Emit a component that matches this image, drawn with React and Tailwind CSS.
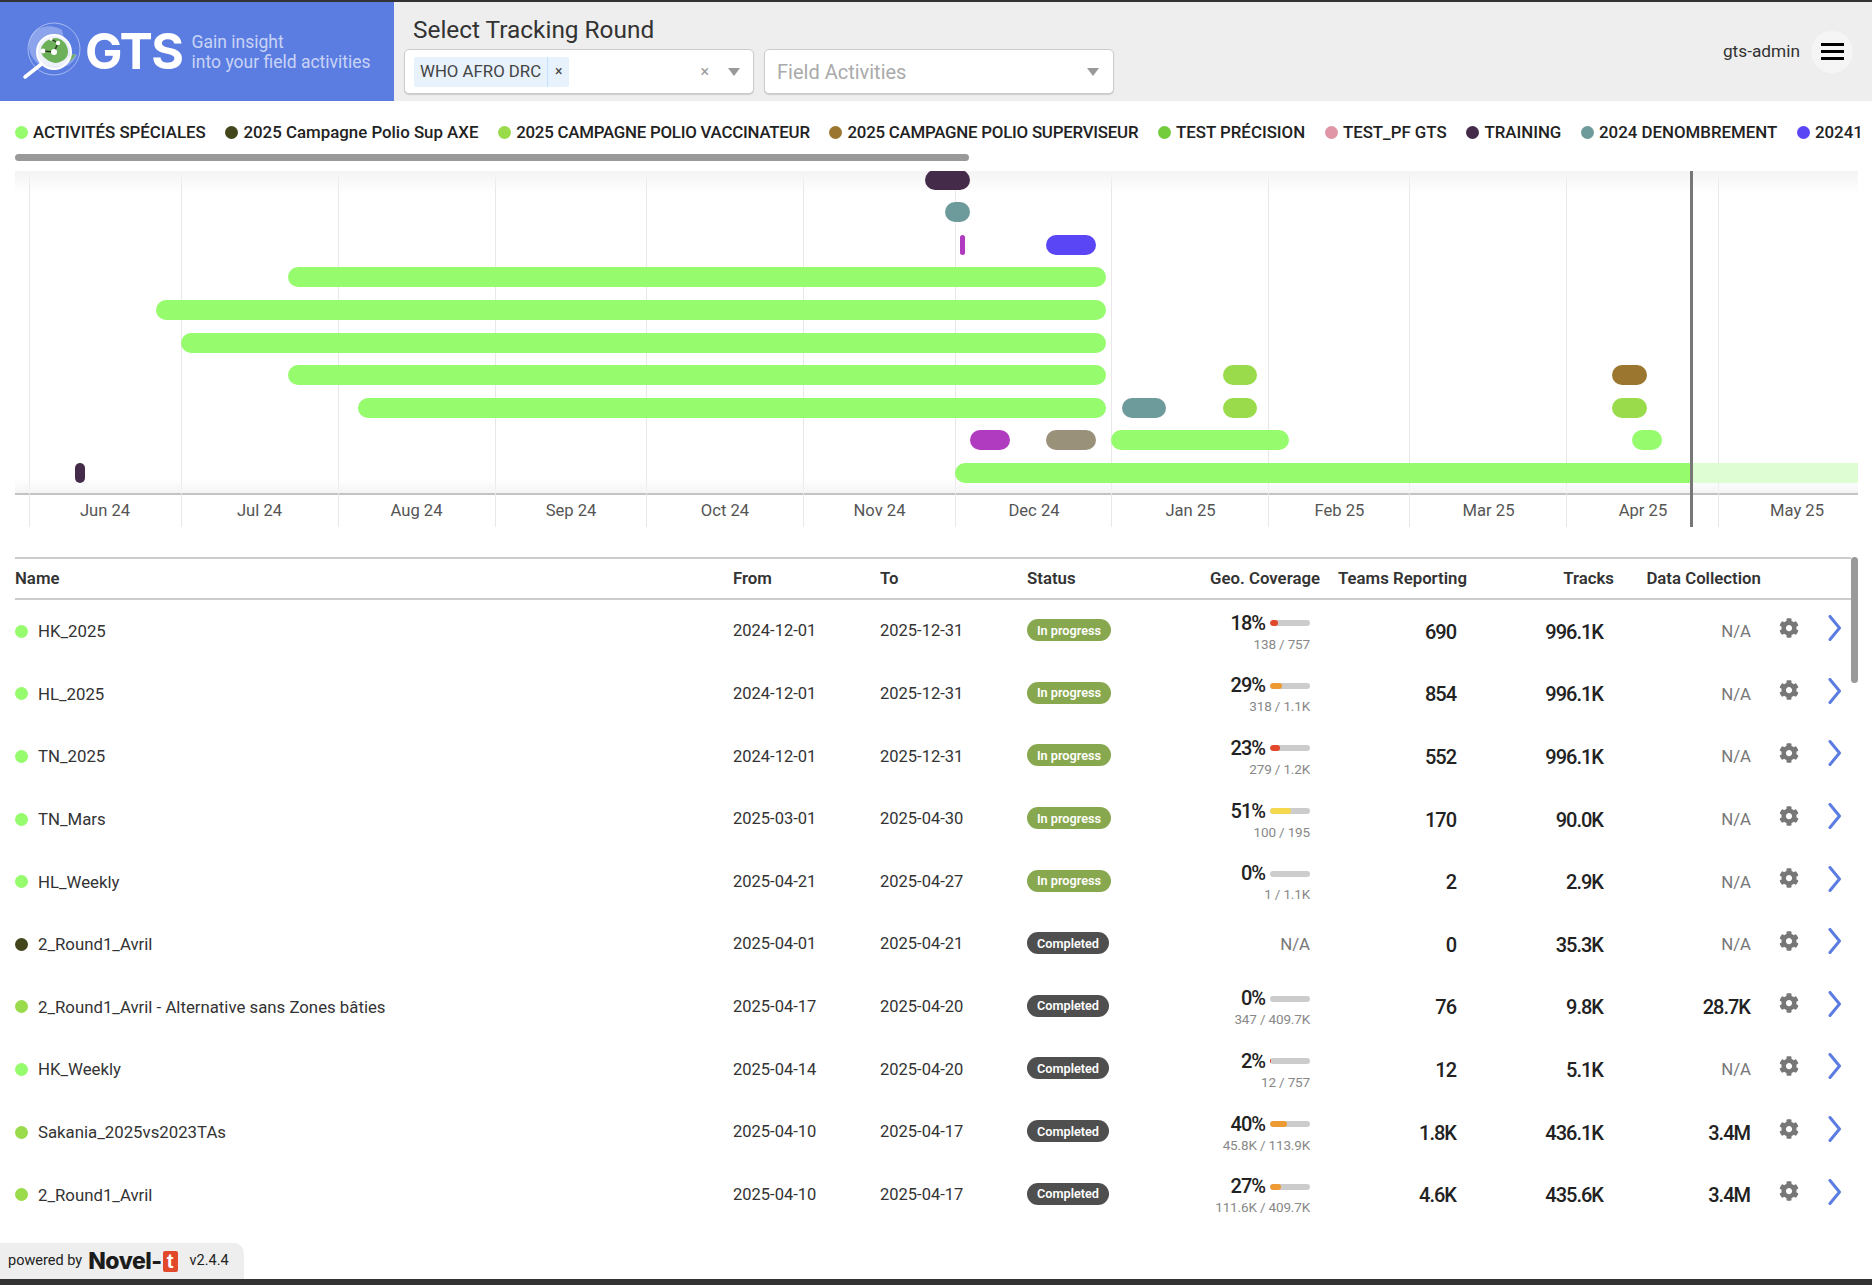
import { FaCog } from 'react-icons/fa';

const GREEN = '#96fc6e';
const LIME = '#9adb4c';
const DARK = '#452b4a';
const TEAL = '#6d9a9a';
const PURPLE = '#b03ac0';

const legend = [
  { label: 'ACTIVITÉS SPÉCIALES', color: GREEN },
  { label: '2025 Campagne Polio Sup AXE', color: '#43461a' },
  { label: '2025 CAMPAGNE POLIO VACCINATEUR', color: LIME, tight: true },
  { label: '2025 CAMPAGNE POLIO SUPERVISEUR', color: '#9b762e', tight: true },
  { label: 'TEST PRÉCISION', color: '#72cc3c' },
  { label: 'TEST_PF GTS', color: '#e096a6' },
  { label: 'TRAINING', color: DARK },
  { label: '2024 DENOMBREMENT', color: TEAL },
  { label: '20241', color: '#5b46f5' },
];

const months = [
  { label: 'Jun 24', w: 152 },
  { label: 'Jul 24', w: 157 },
  { label: 'Aug 24', w: 157 },
  { label: 'Sep 24', w: 152 },
  { label: 'Oct 24', w: 156 },
  { label: 'Nov 24', w: 153 },
  { label: 'Dec 24', w: 156 },
  { label: 'Jan 25', w: 157 },
  { label: 'Feb 25', w: 141 },
  { label: 'Mar 25', w: 157 },
  { label: 'Apr 25', w: 152 },
  { label: 'May 25', w: 156 },
];

const gridLines = [29, 181, 338, 495, 646, 803, 955, 1111, 1268, 1409, 1566, 1718];

// page x of each bar: [from, to, colour]
const ganttRows = [
  [[925, 970, DARK]],
  [[945, 970, TEAL]],
  [[960, 965, PURPLE], [1046, 1096, '#5b46f5']],
  [[288, 1106, GREEN]],
  [[156, 1106, GREEN]],
  [[181, 1106, GREEN]],
  [[288, 1106, GREEN], [1223, 1257, LIME], [1612, 1647, '#9b762e']],
  [[358, 1106, GREEN], [1122, 1166, TEAL], [1223, 1257, LIME], [1612, 1647, LIME]],
  [[970, 1010, PURPLE], [1046, 1096, '#9a917a'], [1111, 1289, GREEN], [1632, 1662, GREEN]],
  [[75, 85, DARK], [955, 1700, GREEN]],
];

const rounds = [
  { name: 'HK_2025', color: GREEN, from: '2024-12-01', to: '2025-12-31', status: 'In progress', pct: 18, sub: '138 / 757', teams: '690', tracks: '996.1K', data: 'N/A' },
  { name: 'HL_2025', color: GREEN, from: '2024-12-01', to: '2025-12-31', status: 'In progress', pct: 29, sub: '318 / 1.1K', teams: '854', tracks: '996.1K', data: 'N/A' },
  { name: 'TN_2025', color: GREEN, from: '2024-12-01', to: '2025-12-31', status: 'In progress', pct: 23, sub: '279 / 1.2K', teams: '552', tracks: '996.1K', data: 'N/A' },
  { name: 'TN_Mars', color: GREEN, from: '2025-03-01', to: '2025-04-30', status: 'In progress', pct: 51, sub: '100 / 195', teams: '170', tracks: '90.0K', data: 'N/A' },
  { name: 'HL_Weekly', color: GREEN, from: '2025-04-21', to: '2025-04-27', status: 'In progress', pct: 0, sub: '1 / 1.1K', teams: '2', tracks: '2.9K', data: 'N/A' },
  { name: '2_Round1_Avril', color: '#43461a', from: '2025-04-01', to: '2025-04-21', status: 'Completed', pct: null, sub: '', teams: '0', tracks: '35.3K', data: 'N/A' },
  { name: '2_Round1_Avril - Alternative sans Zones bâties', color: LIME, from: '2025-04-17', to: '2025-04-20', status: 'Completed', pct: 0, sub: '347 / 409.7K', teams: '76', tracks: '9.8K', data: '28.7K' },
  { name: 'HK_Weekly', color: GREEN, from: '2025-04-14', to: '2025-04-20', status: 'Completed', pct: 2, sub: '12 / 757', teams: '12', tracks: '5.1K', data: 'N/A' },
  { name: 'Sakania_2025vs2023TAs', color: LIME, from: '2025-04-10', to: '2025-04-17', status: 'Completed', pct: 40, sub: '45.8K / 113.9K', teams: '1.8K', tracks: '436.1K', data: '3.4M' },
  { name: '2_Round1_Avril', color: LIME, from: '2025-04-10', to: '2025-04-17', status: 'Completed', pct: 27, sub: '111.6K / 409.7K', teams: '4.6K', tracks: '435.6K', data: '3.4M' },
];

const pctColor = (pct) => {
  if (pct < 25) return '#e2492a';
  if (pct < 50) return '#ee9a33';
  return '#f6d84f';
};

const Logo = () => (
  <svg width="64" height="58" viewBox="0 0 64 58" className="flex-none">
    <circle cx="32" cy="27" r="26" fill="none" stroke="#ffffff" strokeOpacity="0.45" strokeWidth="1" />
    <path d="M14 8C7 14 5 24 9 33c3 6 7 9 10 10l26 1c5-3 8-6 10-11-3-2-6-1-9 1L40 8C32 3 22 3 14 8z" fill="#ffffff" fillOpacity="0.3" />
    <circle cx="32" cy="30" r="17" fill="#ffffff" fillOpacity="0.85" />
    <path d="M19 26c3-7 9-10 15-10 7 1 11 6 12 13 0 5-2 8-6 10-5 3-9 2-13 0-5-3-9-7-8-13z" fill="#6db05a" />
    <path d="M48 32c2 1 4 1 6 0-2 4-5 7-8 8 1-3 1-5 2-8z" fill="#6db05a" />
    <path d="M21 29L32 30L36 21L29 17" fill="none" stroke="#26331f" strokeWidth="1.4" />
    <circle cx="21" cy="29" r="2.4" fill="#ffffff" />
    <circle cx="32" cy="30" r="3" fill="#ffffff" />
    <circle cx="36" cy="21" r="2.2" fill="#ffffff" />
    <circle cx="29" cy="17" r="1.8" fill="#ffffff" />
    <circle cx="32" cy="30" r="17" fill="none" stroke="#ffffff" strokeWidth="2" />
    <path d="M19.5 42L3 55" stroke="#ffffff" strokeWidth="3.6" strokeLinecap="round" />
  </svg>
);

const Caret = () => (
  <span className="h-0 w-0 border-x-[6px] border-t-[8px] border-x-transparent border-t-[#999999]" />
);

const Header = () => (
  <header className="flex h-[101px] flex-none border-t-2 border-[#333333] bg-[#eeeeee]">
    <div className="flex w-[394px] flex-none items-center bg-[#5b7de2] pl-[22px] pb-[1px]">
      <Logo />
      <span className="-ml-[1px] text-[50px] leading-none font-bold text-white font-['Inter',sans-serif] tracking-[-1.5px]">GTS</span>
      <div className="mt-[2px] ml-[9px] text-[17.5px] leading-[20px] text-[#c9d4f5]">
        <div>Gain insight</div>
        <div>into your field activities</div>
      </div>
    </div>
    <div className="ml-[10px] flex-none">
      <div className="mt-[13px] ml-[9px] text-[24.4px] leading-[30px] text-[#333333]">Select Tracking Round</div>
      <div className="mt-[4px] flex gap-[10px]">
        <div className="flex h-[45px] w-[350px] items-center rounded-[5px] border border-[#cccccc] bg-white pr-[13px] pl-[9px] shadow-[0_1px_1px_#cccccc]">
          <div className="flex h-[30px] items-center rounded-[2px] bg-[#e8f2fc] text-[16.8px] text-[#444444]">
            <span className="pr-[6px] pl-[6px]">WHO AFRO DRC</span>
            <span className="flex h-full w-[22px] items-center justify-center border-l border-[#c2e0ff] text-[14px]">×</span>
          </div>
          <span className="ml-auto text-[16px] text-[#999999]">×</span>
          <span className="ml-[19px] flex"><Caret /></span>
        </div>
        <div className="flex h-[45px] w-[350px] items-center justify-between rounded-[5px] border border-[#cccccc] bg-white pr-[14px] pl-[12px] shadow-[0_1px_1px_#cccccc]">
          <span className="text-[20px] text-[#aaaaaa]">Field Activities</span>
          <Caret />
        </div>
      </div>
    </div>
    <div className="ml-auto flex items-center pr-[19px]">
      <span className="text-[17.3px] text-[#333333]">gts-admin</span>
      <div className="ml-[11px] flex h-[42px] w-[42px] flex-col items-center justify-center gap-[4px] rounded-full bg-[#f5f5f5]">
        <span className="h-[3px] w-[23px] bg-black" />
        <span className="h-[3px] w-[23px] bg-black" />
        <span className="h-[3px] w-[23px] bg-black" />
      </div>
    </div>
  </header>
);

const Legend = () => (
  <div className="h-[70px] flex-none px-[15px]">
    <div className="flex h-[53px] w-[1845px] items-center gap-[19.7px] overflow-hidden pt-[9px]">
      {legend.map((item) => (
        <div key={item.label} className="flex flex-none items-center gap-[5px]">
          <span className="h-[13px] w-[13px] rounded-full" style={{ backgroundColor: item.color }} />
          <span className={item.tight
            ? 'text-[16.85px] leading-[20px] font-medium tracking-[-0.23px] whitespace-nowrap text-[#222222]'
            : 'text-[16.85px] leading-[20px] font-medium whitespace-nowrap text-[#222222]'}>
            {item.label}
          </span>
        </div>
      ))}
    </div>
    <div className="h-[7px] w-[954px] rounded-full bg-[#999999]" />
  </div>
);

const Gantt = () => (
  <div className="relative mx-[15px] h-[356px] w-[1843px] flex-none">
    {gridLines.map((x) => (
      <span key={x} className="absolute top-0 h-full w-px bg-[#e8e8e8]" style={{ left: x - 15 }} />
    ))}
    <div className="absolute top-0 h-[22px] w-full bg-gradient-to-b from-[#f4f4f4] to-transparent" />
    <div className="absolute top-[308px] h-[14px] w-full bg-gradient-to-t from-[#f4f4f4] to-transparent" />

    {/* rows of bars */}
    <div className="relative h-[322px] overflow-hidden">
      <div className="-mt-[1.3px]">
        {ganttRows.map((bars, i) => (
          <div key={i} className="relative h-[32.6px]">
            {i === 9 && (
              <span className="absolute top-0 right-0 left-[1676px] h-[20px] bg-[#dffdd3]" />
            )}
            {bars.map(([from, to, color]) => (
              <span
                key={from}
                className={i === 9 && from === 955 ? 'absolute top-0 h-[20px] rounded-l-[10px]' : 'absolute top-0 h-[20px] rounded-[10px]'}
                style={{ left: from - 15, width: (i === 9 && from === 955 ? 1691 : to) - from, backgroundColor: color }}
              />
            ))}
          </div>
        ))}
      </div>
    </div>

    {/* axis */}
    <div className="flex h-[34px] border-t-2 border-[#c4c4c4] pl-[14px]">
      {months.map((m) => (
        <div key={m.label} className="flex-none pt-[6px] text-center text-[16.6px] leading-[20px] text-[#555555]" style={{ width: m.w }}>
          {m.label}
        </div>
      ))}
    </div>
    <span className="absolute top-0 left-[1675px] h-full w-[3px] bg-[#777777]" />
  </div>
);

const cols = 'grid grid-cols-[718px_147px_147px_147px_147px_147px_147px_147px_1fr]';

const TableHead = () => (
  <div className={`${cols} h-[43px] items-center border-y-2 border-[#cccccc] text-[16.8px] font-semibold text-[#333333]`}>
    <div>Name</div>
    <div>From</div>
    <div>To</div>
    <div>Status</div>
    <div className="pr-[1px] text-right">Geo. Coverage</div>
    <div className="pr-[1px] text-right">Teams Reporting</div>
    <div className="pr-[1px] text-right">Tracks</div>
    <div className="pr-[1px] text-right">Data Collection</div>
  </div>
);

const numCell = 'pt-[1px] pr-[12px] text-right text-[20px] font-medium tracking-[-1px] text-[#222222]';
const naCell = 'pt-[1px] pr-[11px] text-right text-[16.8px] text-[#777777]';

const Coverage = ({ pct, sub }) => {
  if (pct === null) {
    return <div className={naCell}>N/A</div>;
  }
  return (
    <div className="pr-[11px] text-right">
      <div className="flex items-center justify-end gap-[5px]">
        <span className="text-[20px] leading-[25px] font-medium tracking-[-1px] text-[#222222]">{pct}%</span>
        <div className="h-[6px] w-[40px] overflow-hidden rounded-full bg-[#cccccc]">
          <div className="h-full rounded-full" style={{ width: `${pct * 1.05}%`, backgroundColor: pctColor(pct) }} />
        </div>
      </div>
      <div className="text-[13.5px] leading-[16px] tracking-[-0.15px] text-[#888888]">{sub}</div>
    </div>
  );
};

const Row = ({ r }) => (
  <div className={`${cols} h-[62.6px] items-center text-[16.8px] text-[#333333]`}>
    <div className="flex items-center gap-[10px]">
      <span className="h-[13px] w-[13px] rounded-full" style={{ backgroundColor: r.color }} />
      <span className="pt-[1px]">{r.name}</span>
    </div>
    <div className="pt-[1px] text-[16.5px]">{r.from}</div>
    <div className="pt-[1px] text-[16.5px]">{r.to}</div>
    <div className="flex pb-[2px]">
      <span className={r.status === 'Completed'
        ? 'inline-flex h-[22px] w-[82px] items-center justify-center rounded-full bg-[#4f4f4f] text-[12.7px] font-semibold text-white'
        : 'inline-flex h-[22px] w-[84px] items-center justify-center rounded-full bg-[#88a84f] text-[12.7px] font-semibold text-white'}>
        {r.status}
      </span>
    </div>
    <Coverage pct={r.pct} sub={r.sub} />
    <div className={numCell}>{r.teams}</div>
    <div className={numCell}>{r.tracks}</div>
    {r.data === 'N/A'
      ? <div className={naCell}>N/A</div>
      : <div className={numCell}>{r.data}</div>}
    <div className="flex items-center justify-between pr-[9px] pb-[6px] pl-[17px]">
      <FaCog className="-mt-[1px] h-[20px] w-[20px] text-[#777777]" />
      <svg width="14" height="26" viewBox="0 0 14 26" fill="none">
        <path d="M2 1.5L11.5 13L2 24.5" stroke="#5b7de2" strokeWidth="3" strokeLinecap="round" strokeLinejoin="round" />
      </svg>
    </div>
  </div>
);

const Table = () => (
  <div className="relative mt-[30px] flex-none pl-[15px]">
    <div className="w-[1836px]">
      <TableHead />
      {rounds.map((r, i) => <Row key={i} r={r} />)}
    </div>
    <span className="absolute top-0 left-[1851px] h-[126px] w-[7px] rounded-full bg-[#999999]" />
  </div>
);

const PoweredBy = () => (
  <div className="absolute bottom-[6px] left-0 flex h-[36px] w-[244px] items-center rounded-tr-[10px] bg-[#eeeeee] pl-[8px] text-[14.5px] text-[#222222]">
    <span>powered by</span>
    <span className="ml-[6px] text-[23px] leading-none font-extrabold tracking-[-0.5px] text-[#1c1c1c] font-['Inter',sans-serif]">Novel-</span>
    <span className="ml-[1px] flex h-[21px] w-[15px] items-center justify-center rounded-[2px] bg-[#e2492a] text-[20px] leading-none font-bold text-white font-['Liberation_Sans',sans-serif]">t</span>
    <span className="ml-[12px]">v2.4.4</span>
  </div>
);

export default function App() {
  return (
    <div className="relative flex h-screen w-full flex-col overflow-hidden bg-white font-['Roboto',sans-serif]">
      <Header />
      <Legend />
      <Gantt />
      <Table />
      <PoweredBy />
      <div className="absolute bottom-0 left-0 h-[6px] w-full bg-[#333333]" />
    </div>
  );
}
